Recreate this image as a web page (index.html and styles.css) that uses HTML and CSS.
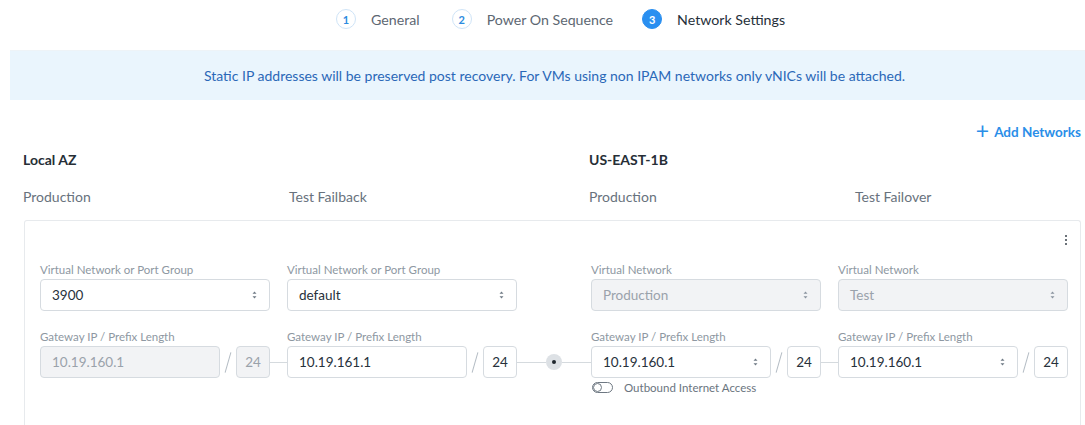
FILE: index.html
```html
<!DOCTYPE html>
<html lang="en">
<head>
<meta charset="utf-8">
<title>Network Settings</title>
<link rel="stylesheet" href="styles.css">
</head>
<body>
  <nav class="stepper">
    <div class="step"><span class="step-num">1</span><span class="step-label">General</span></div>
    <div class="step"><span class="step-num">2</span><span class="step-label">Power On Sequence</span></div>
    <div class="step step-active"><span class="step-num">3</span><span class="step-label">Network Settings</span></div>
  </nav>

  <div class="banner">Static IP addresses will be preserved post recovery. For VMs using non IPAM networks only vNICs will be attached.</div>

  <section class="mapping">
    <div class="toolbar">
      <a class="add-link" href="#"><span class="plus">+</span> Add Networks</a>
    </div>

    <div class="az-row">
      <div class="az-name az-local">Local AZ</div>
      <div class="az-name">US-EAST-1B</div>
    </div>

    <div class="env-row">
      <div class="env">Production</div>
      <div class="env">Test Failback</div>
      <div class="env">Production</div>
      <div class="env">Test Failover</div>
    </div>

    <div class="card">
      <div class="card-top">
        <span class="kebab"><i></i><i></i><i></i></span>
      </div>

      <div class="grid">
        <!-- network selects -->
        <div class="field c1">
          <label class="lbl">Virtual Network or Port Group</label>
          <div class="box select"><span>3900</span><svg class="spin" viewBox="0 0 6 10"><path d="M3 0.5 L5.5 3.5 H0.5Z M3 9.5 L5.5 6.5 H0.5Z"/></svg></div>
        </div>
        <div class="field c3">
          <label class="lbl">Virtual Network or Port Group</label>
          <div class="box select"><span>default</span><svg class="spin" viewBox="0 0 6 10"><path d="M3 0.5 L5.5 3.5 H0.5Z M3 9.5 L5.5 6.5 H0.5Z"/></svg></div>
        </div>
        <div class="field c5">
          <label class="lbl">Virtual Network</label>
          <div class="box select disabled"><span>Production</span><svg class="spin" viewBox="0 0 6 10"><path d="M3 0.5 L5.5 3.5 H0.5Z M3 9.5 L5.5 6.5 H0.5Z"/></svg></div>
        </div>
        <div class="field c7">
          <label class="lbl">Virtual Network</label>
          <div class="box select disabled"><span>Test</span><svg class="spin" viewBox="0 0 6 10"><path d="M3 0.5 L5.5 3.5 H0.5Z M3 9.5 L5.5 6.5 H0.5Z"/></svg></div>
        </div>

        <!-- gateway rows -->
        <div class="field c1 gw">
          <label class="lbl">Gateway IP / Prefix Length</label>
          <div class="ip-row">
            <div class="box ip disabled">10.19.160.1</div>
            <span class="slash"></span>
            <div class="box prefix disabled">24</div>
          </div>
        </div>
        <div class="link c2"><span class="line"></span></div>
        <div class="field c3 gw">
          <label class="lbl">Gateway IP / Prefix Length</label>
          <div class="ip-row">
            <div class="box ip">10.19.161.1</div>
            <span class="slash"></span>
            <div class="box prefix">24</div>
          </div>
        </div>
        <div class="link c4"><span class="line"></span><span class="node"></span><span class="line"></span></div>
        <div class="field c5 gw">
          <label class="lbl">Gateway IP / Prefix Length</label>
          <div class="ip-row">
            <div class="box ip select"><span>10.19.160.1</span><svg class="spin" viewBox="0 0 6 10"><path d="M3 0.5 L5.5 3.5 H0.5Z M3 9.5 L5.5 6.5 H0.5Z"/></svg></div>
            <span class="slash"></span>
            <div class="box prefix">24</div>
          </div>
          <div class="toggle-row">
            <span class="toggle"><i></i></span>
            <span class="toggle-label">Outbound Internet Access</span>
          </div>
        </div>
        <div class="link c6"><span class="line"></span></div>
        <div class="field c7 gw">
          <label class="lbl">Gateway IP / Prefix Length</label>
          <div class="ip-row">
            <div class="box ip select"><span>10.19.160.1</span><svg class="spin" viewBox="0 0 6 10"><path d="M3 0.5 L5.5 3.5 H0.5Z M3 9.5 L5.5 6.5 H0.5Z"/></svg></div>
            <span class="slash"></span>
            <div class="box prefix">24</div>
          </div>
        </div>
      </div>
    </div>
  </section>
</body>
</html>
```

FILE: styles.css
```css
* { box-sizing: border-box; }

html, body {
  margin: 0;
  padding: 0;
  background: #ffffff;
  overflow: hidden;
}

body {
  width: 1085px;
  height: 425px;
  font-family: Lato, "Open Sans", Arial, sans-serif;
  color: #2b3540;
}

/* ---- wizard steps ---- */
.stepper {
  display: flex;
  align-items: center;
  height: 38px;
  padding-left: 336px;
}

.step {
  display: flex;
  align-items: center;
  margin-right: 32px;
}

.step:nth-child(2) {
  margin-right: 29px;
}

.step-num {
  width: 20px;
  height: 20px;
  border-radius: 50%;
  border: 1.5px solid #cfe4f7;
  color: #2c8be0;
  font-size: 11px;
  font-weight: 700;
  display: flex;
  align-items: center;
  justify-content: center;
  margin-right: 15px;
}

.step-label {
  font-size: 14.2px;
  color: #5d6772;
}

.step-active .step-num {
  background: #2a8ff0;
  border-color: #2a8ff0;
  color: #ffffff;
}

.step-active .step-label {
  color: #26303a;
}

/* ---- info banner ---- */
.banner {
  margin: 12px 0 0 10px;
  height: 50px;
  background: #eaf5fd;
  border-top: 1px solid #eef3f7;
  color: #2a68b8;
  font-size: 14px;
  display: flex;
  align-items: center;
  justify-content: center;
  padding-left: 14px;
}

/* ---- network mapping ---- */
.mapping {
  padding: 0 4px 0 23px;
}

.toolbar {
  display: flex;
  justify-content: flex-end;
  height: 28px;
  margin-top: 18px;
  align-items: center;
}

.add-link {
  color: #2a8ee8;
  font-size: 13.5px;
  font-weight: 700;
  text-decoration: none;
  display: flex;
  align-items: center;
}

.plus {
  font-size: 23px;
  font-weight: 400;
  line-height: 1;
  margin-right: 5px;
  margin-top: -4px;
}

.az-row {
  display: flex;
  height: 26px;
  align-items: center;
}

.az-name {
  font-size: 14px;
  font-weight: 700;
  color: #262e36;
}

.az-local {
  flex: none;
  width: 566px;
}

.env-row {
  display: grid;
  grid-template-columns: 266px 300px 266px 1fr;
  height: 48px;
  align-items: center;
}

.env {
  font-size: 14px;
  color: #68727d;
}

/* ---- mapping card ---- */
.card {
  margin-left: 1px;
  border: 1px solid #e7eaed;
  border-bottom: none;
  border-radius: 3px 3px 0 0;
  height: 210px;
  padding: 10px 12px 0 15px;
}

.card-top {
  display: flex;
  justify-content: flex-end;
  height: 18px;
  padding-right: 1px;
}

.kebab {
  display: flex;
  flex-direction: column;
  justify-content: space-between;
  height: 10px;
  margin-top: 4px;
}

.kebab i {
  display: block;
  width: 2px;
  height: 2px;
  border-radius: 50%;
  background: #3a434c;
}

.grid {
  display: grid;
  grid-template-columns: 230px 17px 230px 74px 230px 17px 230px;
  row-gap: 19px;
  margin-top: 14px;
}

.c1 { grid-column: 1; }
.c2 { grid-column: 2; }
.c3 { grid-column: 3; }
.c4 { grid-column: 4; }
.c5 { grid-column: 5; }
.c6 { grid-column: 6; }
.c7 { grid-column: 7; }

.gw { grid-row: 2; }
.link { grid-row: 2; }

.lbl {
  display: block;
  font-size: 11.5px;
  color: #8e98a2;
  height: 16px;
  line-height: 13px;
}

.box {
  height: 32px;
  border: 1px solid #d6dbe0;
  border-radius: 4px;
  background: #ffffff;
  font-size: 13.5px;
  color: #27313b;
  display: flex;
  align-items: center;
  padding: 0 12px 0 11px;
}

.box.disabled {
  background: #f2f3f5;
  color: #9aa2ab;
}

.select {
  justify-content: space-between;
}

.spin {
  width: 5px;
  height: 8px;
  fill: #6f7a85;
}

.disabled .spin { fill: #8a949e; }

.ip-row {
  display: flex;
  align-items: center;
}

.ip {
  flex: 1;
}

.prefix {
  width: 34px;
  justify-content: center;
  padding: 0;
  flex: none;
}

/* slash divider between address and prefix */
.slash {
  width: 16px;
  height: 32px;
  flex: none;
  position: relative;
}

.slash::after {
  content: "";
  position: absolute;
  left: 50%;
  top: 6px;
  width: 1px;
  height: 21px;
  background: #b4bcc4;
  transform: translateX(-50%) rotate(16deg);
}

/* connectors between mapped fields */
.link {
  display: flex;
  align-items: center;
  height: 32px;
  margin-top: 16px;
}

.line {
  flex: 1;
  height: 1px;
  background: #d5dade;
}

.node {
  width: 16px;
  height: 16px;
  border-radius: 50%;
  background: #dde1e5;
  flex: none;
  display: flex;
  align-items: center;
  justify-content: center;
}

.node::after {
  content: "";
  width: 4px;
  height: 4px;
  border-radius: 50%;
  background: #1f262d;
}

.toggle-row {
  display: flex;
  align-items: center;
  margin-top: 3px;
  padding-left: 1px;
}

.toggle {
  width: 21px;
  height: 11px;
  border: 1px solid #6e7882;
  border-radius: 6px;
  position: relative;
  margin-right: 11px;
}

.toggle i {
  position: absolute;
  left: 0;
  top: 0;
  width: 9px;
  height: 9px;
  border-radius: 50%;
  border: 1px solid #6e7882;
  background: #ffffff;
}

.toggle-label {
  font-size: 11.5px;
  color: #6a747e;
}
```
